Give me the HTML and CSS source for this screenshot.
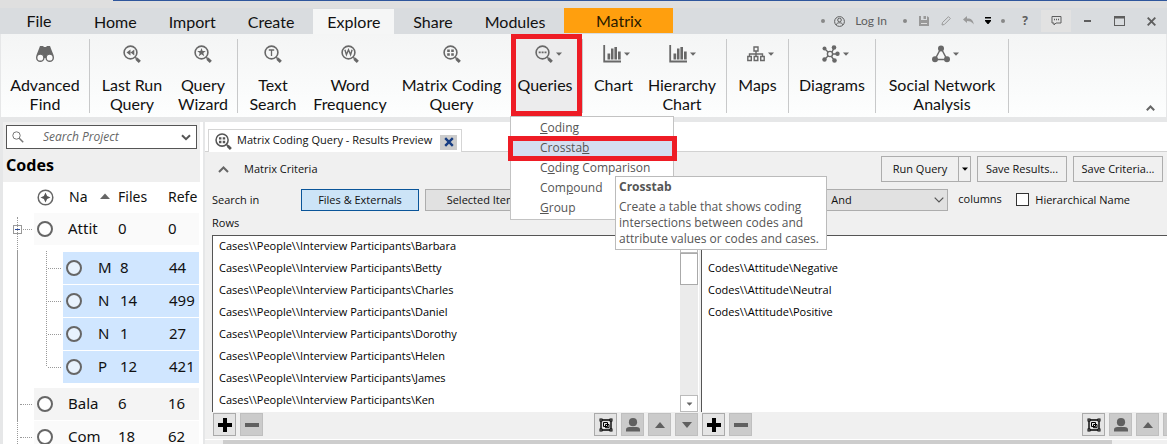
FILE: index.html
```
<!DOCTYPE html>
<html lang="en">
<head>
<meta charset="utf-8">
<title>Matrix Coding Query</title>
<link rel="stylesheet" href="styles.css">
</head>
<body>
<svg class="defs" aria-hidden="true">
  <symbol id="lens" viewBox="0 0 18 18"><circle cx="7.5" cy="7.5" r="6.4" fill="none" stroke="currentColor" stroke-width="1.6"/><path d="M12.3 12.3l1.4 1.4" stroke="currentColor" stroke-width="1.6"/><path d="M13.4 13.6l3.4 3.3" stroke="currentColor" stroke-width="3"/></symbol>
  <symbol id="grid" viewBox="0 0 18 18"><use href="#lens"/><path d="M4.2 4.4h2.6v2.6H4.2zM8.2 4.4h2.6v2.6H8.2zM4.2 8.2h2.6v2.6H4.2zM8.2 8.2h2.6v2.6H8.2z" fill="currentColor"/></symbol>
  <symbol id="chart" viewBox="0 0 18 18"><path d="M1.2 0v16.500H18" fill="none" stroke="currentColor" stroke-width="1.8"/><path d="M4.500 8.500h2.700v6H4.500zM8 3.500h2.500v11H8zM11.400 2H14v12.500h-2.600zM15 6.500h2.700v8H15z" fill="currentColor"/></symbol>
  <symbol id="arrow" viewBox="0 0 6 4"><path d="M0 .5h6L3 3.700z" fill="currentColor"/></symbol>
  <symbol id="plus" viewBox="0 0 14 14"><path d="M5 0h4v5h5v4H9v5H5V9H0V5h5z" fill="currentColor"/></symbol>
  <symbol id="minus" viewBox="0 0 14 14"><path d="M0 5h14v4H0z" fill="currentColor"/></symbol>
  <symbol id="group" viewBox="0 0 14 14"><path d="M2 2h10v10H2z" fill="none" stroke="currentColor" stroke-width="1.400"/><path d="M4.500 4.500h4v4h-4zM6.500 6.500h3.500v3.200H6.500z" fill="none" stroke="currentColor"/><path d="M.5.500h3v3h-3zM10.500.500h3v3h-3zM.5 10.500h3v3h-3zM10.500 10.500h3v3h-3z" fill="currentColor"/><path d="M1.500 1.500h1v1h-1zM11.500 1.500h1v1h-1zM1.500 11.500h1v1h-1zM11.500 11.500h1v1h-1z" fill="#eee"/></symbol>
  <symbol id="person" viewBox="0 0 14 14"><circle cx="7" cy="4.200" r="4.100" fill="currentColor"/><path d="M0 13.500v-2Q0 9 3.500 9h7Q14 9 14 11.500v2z" fill="currentColor"/></symbol>
  <symbol id="up" viewBox="0 0 14 14"><path d="M2 10l5-6 5 6z" fill="currentColor"/></symbol>
  <symbol id="down" viewBox="0 0 14 14"><path d="M2 4l5 6 5-6z" fill="currentColor"/></symbol>
</svg>

<header class="titlebar">
  <nav class="tabs">
    <button class="tab file">File</button>
    <button class="tab">Home</button>
    <button class="tab">Import</button>
    <button class="tab">Create</button>
    <button class="tab active">Explore</button>
    <button class="tab">Share</button>
    <button class="tab">Modules</button>
    <button class="tab matrix">Matrix</button>
  </nav>
  <div class="tools">
    <i class="dot"></i>
    <button class="login"><svg width="11" height="11" viewBox="0 0 11 11" fill="none" stroke="currentColor"><circle cx="5.500" cy="5.500" r="4.900"/><circle cx="5.500" cy="4" r="1.800"/><path d="M2 9c.5-3 6.500-3 7 0"/></svg>Log In</button>
    <i class="dot"></i>
    <button class="tool pale" aria-label="Save"><svg width="10" height="10" viewBox="0 0 10 10"><path d="M0 0h2v4h6V0l2 1.500V10H0zM4.500 0H7v3H4.500z" fill="currentColor"/><path d="M2 4h6v2H2z" fill="currentColor"/><path d="M2 7h6v1H2z" fill="#ddd"/></svg></button>
    <button class="tool pale" aria-label="Edit"><svg width="10" height="10" viewBox="0 0 10 10" fill="none" stroke="currentColor"><path d="M1 9l.5-2.500L7.500.700l1.800 1.800-6 6z"/></svg></button>
    <button class="tool pale" aria-label="Undo"><svg width="11" height="10" viewBox="0 0 11 10"><path d="M0 3.500L4 0v2.500h2q4 .5 4.800 6L9.500 7Q8 5 4 5v2z" fill="currentColor"/></svg></button>
    <button class="tool customize" aria-label="Customize"><svg width="6" height="8" viewBox="0 0 6 8"><path d="M0 0h6v1.500H0zM0 3h6v1L3.500 7h-1L0 4z" fill="currentColor"/></svg></button>
    <i class="dot"></i>
    <button class="tool help" aria-label="Help">?</button>
    <button class="tool comment" aria-label="Feedback"><svg width="11" height="10" viewBox="0 0 11 10" fill="none" stroke="currentColor"><path d="M1 .5h9v6.500H5L3 9V7H1z"/><path d="M3 3.500h5" stroke-dasharray="1 1" stroke-width="1.500"/></svg></button>
    <button class="tool" aria-label="Minimize"><svg width="7" height="2" viewBox="0 0 7 2"><path d="M0 0h7v2H0z" fill="currentColor"/></svg></button>
    <button class="tool" aria-label="Maximize"><svg width="11" height="10" viewBox="0 0 11 10"><path d="M0 0h11v10H0zM1 2.500V9h9V2.500z" fill="currentColor" fill-rule="evenodd"/></svg></button>
    <button class="tool" aria-label="Close"><svg width="9" height="9" viewBox="0 0 9 9"><path d="M.700.700l7.600 7.600M8.300.700L.700 8.300" stroke="currentColor" stroke-width="1.900"/></svg></button>
  </div>
</header>

<section class="ribbon">
  <div class="group g1">
    <button class="cmd w89"><span class="ic"><svg width="18" height="18" viewBox="0 0 18 18"><path d="M4 1h3l1 1h2l1-1h3l1.500 4 2 5v3H.500v-3l2-5z" fill="currentColor"/><circle cx="4.300" cy="12.700" r="3.600" fill="#fafafa" stroke="currentColor" stroke-width="1.400"/><circle cx="13.700" cy="12.700" r="3.600" fill="#fafafa" stroke="currentColor" stroke-width="1.400"/></svg></span><span>Advanced<br>Find</span></button>
  </div>
  <div class="group g2">
    <button class="cmd w84"><span class="ic"><svg width="18" height="18" viewBox="0 0 18 18"><use href="#lens"/><path d="M7.500 4.500v6L3.500 7.500zM11.300 4.500v6L7.500 7.500z" fill="currentColor"/></svg></span><span>Last Run<br>Query</span></button>
    <button class="cmd w58"><span class="ic"><svg width="18" height="18" viewBox="0 0 18 18"><use href="#lens"/><path d="M7.500 3l1.100 3.100h3.200L9.300 8l1 3.200-2.800-1.900-2.800 1.900 1-3.200-2.500-1.900h3.200z" fill="currentColor"/></svg></span><span>Query<br>Wizard</span></button>
  </div>
  <div class="group g3">
    <button class="cmd w70"><span class="ic"><svg width="18" height="18" viewBox="0 0 18 18"><use href="#lens"/><path d="M4.800 5h5.400M7.500 5v6" stroke="currentColor" stroke-width="1.300"/></svg></span><span>Text<br>Search</span></button>
    <button class="cmd w84"><span class="ic"><svg width="18" height="18" viewBox="0 0 18 18"><use href="#lens"/><path d="M3.900 4.800l1.500 5 2.100-5 2.100 5 1.500-5" fill="none" stroke="currentColor" stroke-width="1.400"/></svg></span><span>Word<br>Frequency</span></button>
    <button class="cmd w119"><span class="ic"><svg width="18" height="18"><use href="#grid"/></svg></span><span>Matrix Coding<br>Query</span></button>
    <div class="dropdown">
      <button class="cmd marked"><span class="ic drop"><svg width="18" height="18" viewBox="0 0 18 18"><use href="#lens"/><path d="M3.700 6.600h2v1.600h-2zM6.600 6.600h2v1.600h-2zM9.500 6.600h2v1.600h-2z" fill="currentColor"/></svg><svg width="6" height="4"><use href="#arrow"/></svg></span><span>Queries</span></button>
      <div class="menu">
        <button><u>C</u>oding</button>
        <button class="on">Crossta<u>b</u></button>
        <button>C<u>o</u>ding Comparison</button>
        <button>Com<u>p</u>ound</button>
        <button><u>G</u>roup</button>
        <div class="tooltip" role="tooltip"><b>Crosstab</b><p>Create a table that shows coding<br>intersections between codes and<br>attribute values or codes and cases.</p></div>
      </div>
    </div>
  </div>
  <div class="group g4">
    <button class="cmd w62"><span class="ic drop"><svg width="18" height="18"><use href="#chart"/></svg><svg width="6" height="4"><use href="#arrow"/></svg></span><span>Chart</span></button>
    <button class="cmd w74"><span class="ic"><svg width="18" height="18"><use href="#chart"/></svg><svg width="6" height="4"><use href="#arrow"/></svg></span><span>Hierarchy<br>Chart</span></button>
  </div>
  <div class="group g5">
    <button class="cmd w62"><span class="ic drop"><svg width="18" height="18" viewBox="0 0 18 18" fill="none" stroke="currentColor" stroke-width="1.400"><path d="M7 2h4v4H7zM.8 11.500h3.500v4H.8zM7.200 11.500h3.600v4H7.200zM13.700 11.500h3.500v4h-3.500zM9 6v5.500M2.500 11.500V9h13v2.500"/></svg><svg width="6" height="4"><use href="#arrow"/></svg></span><span>Maps</span></button>
  </div>
  <div class="group g6">
    <button class="cmd w88"><span class="ic drop"><svg width="18" height="18" viewBox="0 0 18 18"><g stroke="currentColor" stroke-width="1.400" fill="none"><circle cx="8" cy="9" r="2.600"/><path d="M6 7L3 4M10 7l2-4M10.500 9H15M6 11l-3 3M9.500 11.500L12 15"/></g><g fill="currentColor"><circle cx="2.500" cy="3.500" r="2"/><circle cx="12" cy="2.500" r="2.300"/><circle cx="15.500" cy="8.700" r="2.200"/><circle cx="2.500" cy="14.500" r="2.200"/><circle cx="12.500" cy="15.500" r="2.300"/></g></svg><svg width="6" height="4"><use href="#arrow"/></svg></span><span>Diagrams</span></button>
  </div>
  <div class="group g7">
    <button class="cmd w131"><span class="ic drop"><svg width="18" height="18" viewBox="0 0 18 18"><path d="M9 3L3 14.500h12z" fill="none" stroke="currentColor" stroke-width="1.500"/><g fill="currentColor"><circle cx="9" cy="3.500" r="3"/><circle cx="3" cy="14.200" r="3"/><circle cx="15" cy="14.200" r="3"/></g></svg><svg width="6" height="4"><use href="#arrow"/></svg></span><span>Social Network<br>Analysis</span></button>
  </div>
  <button class="collapse" aria-label="Collapse ribbon"><svg width="9" height="6" viewBox="0 0 9 6"><path d="M.8 5.200l3.700-3.700 3.700 3.700" fill="none" stroke="currentColor" stroke-width="2"/></svg></button>
</section>

<main class="main">
  <aside class="side">
    <div class="side-top">
      <label class="search">
        <svg width="12" height="12" viewBox="0 0 12 12" fill="none" stroke="#777"><circle cx="4.500" cy="4.500" r="3.700"/><path d="M7.200 7.200l4 4" stroke-width="1.500"/></svg>
        <input type="text" placeholder="Search Project" aria-label="Search Project">
        <svg width="10" height="7" viewBox="0 0 10 7"><path d="M1 1.200l4 4 4-4" fill="none" stroke="#555" stroke-width="2"/></svg>
      </label>
      <h2>Codes</h2>
    </div>
    <div class="tree">
      <div class="row head"><svg class="circle" width="17" height="17" viewBox="0 0 17 17"><circle cx="8.500" cy="8.500" r="7.300" fill="none" stroke="#666" stroke-width="1.500"/><path d="M8.500 3.500l1.600 3.400 3.400 1.600-3.400 1.600-1.600 3.400-1.600-3.400-3.400-1.600 3.400-1.600z" fill="#555"/></svg><span class="name">Na</span><svg class="sort" width="10" height="6" viewBox="0 0 10 6"><path d="M0 6l5-5.500L10 6z" fill="#666"/></svg><span class="files">Files</span><span>Refe</span></div>
      <div class="row parent open shade"><span class="box"></span><i class="ring"></i><span class="name">Attit</span><span class="files">0</span><span>0</span></div>
      <div class="children">
        <div class="row"><i class="ring"></i><span class="name">M</span><span class="files">8</span><span>44</span></div>
        <div class="row"><i class="ring"></i><span class="name">N</span><span class="files">14</span><span>499</span></div>
        <div class="row"><i class="ring"></i><span class="name">N</span><span class="files">1</span><span>27</span></div>
        <div class="row"><i class="ring"></i><span class="name">P</span><span class="files">12</span><span>421</span></div>
      </div>
      <div class="row parent dark"><i class="ring"></i><span class="name">Bala</span><span class="files">6</span><span>16</span></div>
      <div class="row parent shade"><i class="ring"></i><span class="name">Com</span><span class="files">18</span><span>62</span></div>
    </div>
  </aside>

  <section class="work">
    <div class="doctabs">
      <div class="doctab"><svg width="17" height="17"><use href="#grid"/></svg><span>Matrix Coding Query - Results Preview</span><button aria-label="Close tab"><svg width="10" height="10" viewBox="0 0 10 10"><path d="M1.200 1.200l7.600 7.600M8.800 1.200L1.200 8.800" stroke="#173d83" stroke-width="2.400"/></svg></button></div>
    </div>
    <div class="pane">
      <div class="criteria">
        <svg width="11" height="7" viewBox="0 0 11 7"><path d="M1 6l4.500-4.500L10 6" fill="none" stroke="#666" stroke-width="2"/></svg>
        <span class="grow">Matrix Criteria</span>
        <span class="split"><button class="btn run">Run Query</button><button class="btn more" aria-label="Run options"><svg width="6" height="4"><use href="#arrow"/></svg></button></span>
        <button class="btn">Save Results...</button>
        <button class="btn">Save Criteria...</button>
      </div>
      <div class="filters">
        <span class="lead">Search in</span>
        <button class="pick on">Files &amp; Externals</button>
        <button class="pick">Selected Items</button>
        <label class="combo"><select aria-label="Operator"><option>And</option></select><svg width="10" height="6" viewBox="0 0 10 6"><path d="M.7.700L5 5 9.300.700" fill="none" stroke="#555" stroke-width="1.200"/></svg></label>
        <span class="cols">columns</span>
        <label class="check"><input type="checkbox">Hierarchical Name</label>
      </div>
      <div class="caption">Rows</div>
      <div class="lists">
        <div class="col">
          <div class="list">
            <ul>
              <li>Cases\\People\\Interview Participants\Barbara</li>
              <li>Cases\\People\\Interview Participants\Betty</li>
              <li>Cases\\People\\Interview Participants\Charles</li>
              <li>Cases\\People\\Interview Participants\Daniel</li>
              <li>Cases\\People\\Interview Participants\Dorothy</li>
              <li>Cases\\People\\Interview Participants\Helen</li>
              <li>Cases\\People\\Interview Participants\James</li>
              <li>Cases\\People\\Interview Participants\Ken</li>
            </ul>
            <div class="scroll"><span class="end"></span><span class="thumb"></span><span class="end low"><svg width="7" height="4" viewBox="0 0 6 4"><use href="#arrow"/></svg></span></div>
          </div>
          <div class="actions">
            <button class="act" aria-label="Add row"><svg width="14" height="14"><use href="#plus"/></svg></button>
            <button class="act off" aria-label="Remove row"><svg width="14" height="14"><use href="#minus"/></svg></button>
            <span class="grow"></span>
            <button class="act" aria-label="Group"><svg width="14" height="14"><use href="#group"/></svg></button>
            <button class="act off" aria-label="Person"><svg width="14" height="14"><use href="#person"/></svg></button>
            <button class="act off" aria-label="Move up"><svg width="14" height="14"><use href="#up"/></svg></button>
            <button class="act off" aria-label="Move down"><svg width="14" height="14"><use href="#down"/></svg></button>
          </div>
        </div>
        <div class="col">
          <div class="list">
            <ul>
              <li>Codes\\Attitude\Mixed</li>
              <li>Codes\\Attitude\Negative</li>
              <li>Codes\\Attitude\Neutral</li>
              <li>Codes\\Attitude\Positive</li>
            </ul>
          </div>
          <div class="actions cut">
            <button class="act" aria-label="Add column"><svg width="14" height="14"><use href="#plus"/></svg></button>
            <button class="act off" aria-label="Remove column"><svg width="14" height="14"><use href="#minus"/></svg></button>
            <span class="grow"></span>
            <button class="act" aria-label="Group"><svg width="14" height="14"><use href="#group"/></svg></button>
            <button class="act off" aria-label="Person"><svg width="14" height="14"><use href="#person"/></svg></button>
            <button class="act off" aria-label="Move up"><svg width="14" height="14"><use href="#up"/></svg></button>
            <button class="act off" aria-label="Move down"><svg width="14" height="14"><use href="#down"/></svg></button>
          </div>
        </div>
      </div>
      <div class="hscroll"><span></span></div>
    </div>
  </section>
</main>
</body>
</html>
```
FILE: styles.css
```
* { box-sizing: border-box; }
html, body { height: 100%; }
body {
  margin: 0;
  display: flex;
  flex-direction: column;
  overflow: hidden;
  background: #e6e7e8;
  color: #111;
  font: 12px/16px "Open Sans", "Noto Sans", sans-serif;
}
button { font: inherit; color: inherit; border: 0; padding: 0; background: none; display: flex; align-items: center; justify-content: center; }
svg { flex: none; display: block; }
ul, p, h2 { margin: 0; padding: 0; list-style: none; }
.defs { position: absolute; width: 0; height: 0; }
.grow { flex: 1; }

/* title bar */
.titlebar {
  flex: none;
  display: flex;
  height: 34px;
  padding-top: 8px;
  background: linear-gradient(90deg, #dfdfdf 113px, #2f569c 113px) 0 0 / 100% 1px no-repeat,
    linear-gradient(#dfdfdf, #dfdfdf) 0 0 / 100% 8px no-repeat, #d9dcdf;
}
.tabs { display: flex; font: 16px/24px Lato, sans-serif; }
.tab { padding: 1px 16px 0; }
.tab.file { width: 78px; padding: 0 0 1px; }
.tab.active { background: #f5f6f6; margin: 1px 3px 0; padding: 0 14px; }
.tab.matrix { background: #ff9f0e; width: 109px; margin: 0 0 1px 3px; color: #2a1a00; }
.tools { flex: 1; display: flex; align-items: center; justify-content: flex-end; color: #5e5e5e; }
.dot { width: 4px; height: 4px; border-radius: 2px; background: #888; }
.login { gap: 10px; margin: 0 16px 0 9px; font: 12px/16px Lato, sans-serif; }
.tool { width: 22px; height: 22px; }
.tool.pale { color: #999; }
.dot + .tool.pale { margin-left: 6px; }
.tool.customize { color: #000; width: 18px; margin-right: 4px; }
.tool.help { font: bold 12px/16px "Open Sans", sans-serif; margin: 0 5px 0 9px; }
.tool.comment { width: 30px; background: #e2e2e2; }
.tool.comment ~ .tool { width: 32px; }

/* ribbon */
.ribbon {
  flex: none;
  display: flex;
  height: 83px;
  margin: 0 1px 5px;
  background: linear-gradient(#f4f5f5, #fdfefe);
  font: 16px/19px Lato, sans-serif;
}
.group { display: flex; position: relative; border-right: 1px solid transparent; border-image: linear-gradient(transparent 6px, #c8c9ca 6px, #c8c9ca 78px, transparent 78px) 1; }
.cmd { flex-direction: column; justify-content: flex-start; padding-top: 10px; gap: 12px; text-align: center; height: 83px; white-space: nowrap; }
.cmd span { flex: none; }
.ic { display: flex; align-items: center; gap: 3px; color: #686868; height: 19px; }
.drop { padding-left: 6px; }
.w58 { width: 58px; } .w62 { width: 61px; } .w70 { width: 70px; } .w74 { width: 76px; }
.w84 { width: 84px; } .w88 { width: 86px; } .w89 { width: 88px; } .w119 { width: 119px; } .w131 { width: 132px; }
.g2 { padding-right: 5px; }
.g4 { padding-right: 6px; }
.dropdown { position: relative; }
.marked { width: 71px; height: 82px; padding: 5px 3px 0 0; border: 5px solid #ee1c25; background: #ececed; }
.collapse { margin: auto 11px 4px auto; width: 10px; height: 10px; color: #666; }

.menu {
  position: absolute;
  z-index: 2;
  left: -1px;
  top: 82px;
  width: 164px;
  padding: 1px 0;
  background: #fff;
  border: 1px solid #c3c3c3;
  color: #555;
  font: 12px/20px "Open Sans", sans-serif;
}
.menu button { width: 100%; height: 20px; padding-left: 29px; justify-content: flex-start; white-space: pre; }
.menu .on { width: 169px; height: 25px; margin: -2px 0 -3px -3px; padding: 0 0 2px 27px; border: 5px solid #ee1c25; background: #d4def0; }
.tooltip {
  position: absolute;
  left: 104px;
  top: 59px;
  width: 212px;
  padding: 2px 3px;
  background: #fff;
  border: 1px solid #bbb;
  line-height: 16px;
}
.tooltip p { margin-top: 4px; white-space: nowrap; }

/* project tree */
.main { flex: 1; min-height: 0; display: flex; }
.side { flex: none; width: 200px; margin-left: 3px; background: #fff; overflow: hidden; border-right: 3px solid #fff; }
.side-top { background: #efefef; padding: 3px 0 0 3px; height: 60px; }
.search { display: flex; align-items: center; width: 191px; height: 24px; padding: 0 5px; background: #fff; border: 1px solid #555; }
.search input { flex: 1; min-width: 0; border: 0; padding: 0 0 0 19px; background: none; outline: 0; font: italic 12px/16px "Open Sans", sans-serif; }
.search input::placeholder { color: #666; opacity: 1; }
h2 { font: bold 16px/32px "Noto Sans", sans-serif; color: #000; }
.tree { font: 15px/20px "Noto Sans", sans-serif; }
.row { display: flex; align-items: center; height: 32px; margin: 0 1px 1px 31px; padding-left: 3px; position: relative; }
.row span { padding-bottom: 2px; }
.row .name { margin-left: 15px; width: 35px; flex: none; }
.row .files { width: 50px; margin-left: 15px; flex: none; }
.row.head { height: 31px; margin-bottom: 0; font-size: 14px; overflow: hidden; }
.row.head .name { width: 20px; }
.sort { margin: -4px 0 0 11px; }
.row.head .files { margin-left: 8px; }
.ring { flex: none; width: 16px; height: 16px; border: 2px solid #666; border-radius: 50%; background: #fff; }
.shade { background: #fafafa; }
.dark { background: #f4f4f4; }
.parent::before { content: ""; position: absolute; left: -14px; top: 16px; width: 12px; border-top: 1px dotted #999; }
.parent::after { content: ""; position: absolute; left: -17px; top: -171px; height: 204px; border-left: 1px dotted #999; }
.open::after { display: none; }
.box { position: absolute; left: -21px; top: 12px; width: 9px; height: 9px; border: 1px solid #999; background: linear-gradient(#2a4a9c, #2a4a9c) 50% 50% / 5px 1px no-repeat #fff; }
.row .box { padding: 0; }
.children { margin: 6px 1px 22px 43px; border-left: 1px dotted #999; height: 115px; padding-top: 1px; }
.children .row { margin: 0 0 1px 16px; padding-left: 3px; background: #d0e6ff; }
.children .row::before { content: ""; position: absolute; left: -15px; top: 16px; width: 13px; border-top: 1px dotted #999; }
.children .ring { background: #e8f2fd; }
.children .row .name { margin-left: 16px; width: 15px; }
.children .row .files { margin-left: 7px; width: 49px; }

/* results */
.work { flex: 1; min-width: 0; display: flex; flex-direction: column; border-left: 2px solid #e6e7e8; background: #fff; }
.doctabs { flex: none; height: 30px; padding: 7px 0 0 3px; border-bottom: 1px solid #d2d2d2; }
.doctab { display: flex; align-items: center; width: 254px; height: 23px; padding: 0 4px 0 6px; border: 1px solid #d5d5d5; border-bottom: 0; background: #fff; white-space: nowrap; color: #111; font-size: 11px; }
.doctab > svg { color: #555; }
.doctab span { flex: 1; margin-left: 5px; padding-bottom: 2px; }
.doctab button { width: 17px; height: 15px; background: #ccc; margin-top: 2px; }
.pane { flex: 1; min-height: 0; display: flex; flex-direction: column; background: #f0f0f0; padding-left: 7px; font-size: 11px; }
.criteria { display: flex; align-items: center; gap: 6px; padding: 4px 4px 0 6px; height: 30px; }
.criteria .grow { margin-left: 9px; }
.split { display: flex; }
.btn { width: 90px; height: 26px; border: 1px solid #adadad; background: #f0f0f0; color: #111; white-space: nowrap; }
.btn.run { width: 78px; }
.btn.more { width: 13px; margin-left: -1px; color: #000; }
.filters { display: flex; align-items: center; height: 35px; white-space: nowrap; }
.lead { width: 89px; }
.pick { width: 118px; height: 22px; margin-right: 6px; border: 1px solid #adadad; background: #e1e1e1; }
.pick.on { border-color: #0a5599; background: #cce4f7; }
.combo { position: relative; display: flex; width: 148px; margin-left: auto; }
.combo select { appearance: none; width: 100%; height: 22px; margin: 0; padding: 0 0 0 30px; border: 1px solid #adadad; border-radius: 0; background: #e1e1e1; font: inherit; color: #111; }
.combo svg { position: absolute; right: 4px; top: 8px; }
.cols { width: 68px; padding: 0 0 2px 10px; }
.check { display: flex; align-items: center; gap: 6px; margin-right: 37px; }
.check input { appearance: none; width: 13px; height: 13px; margin: 0; border: 1px solid #333; background: #fff; }
.caption { height: 18px; line-height: 12px; }
.lists { display: grid; grid-template-columns: 487fr 466fr; gap: 2px; }
.list { display: flex; height: 177px; background: #fff; border: solid #555; border-width: 1px 0 0 1px; }
.list ul { flex: 1; padding-left: 6px; color: #000; }
.list li { height: 22px; line-height: 20px; white-space: nowrap; }
.scroll { width: 18px; margin-right: 1px; display: flex; flex-direction: column; background: #ebebeb; }
.end { height: 17px; border: 1px solid #bbb; background: #fff; display: flex; align-items: center; justify-content: center; color: #666; }
.thumb { height: 32px; background: #fff; border: 1px solid #aaa; }
.low { margin-top: auto; }
.actions { display: flex; gap: 4px; padding: 1px 1px 0; height: 27px; }
.act { width: 23px; height: 23px; border: 1px solid #aaa; background: #e4e4e4; color: #000; }
.act.off { background: #cbcbcb; border-color: #bfbfbf; color: #606060; }
.cut { margin-right: -20px; }
.hscroll { flex: 1; margin-left: -7px; padding: 0 55px 0 18px; display: flex; border-top: 1px solid #fff; }
.hscroll span { flex: 1; background: #cdcdcd; }
```
